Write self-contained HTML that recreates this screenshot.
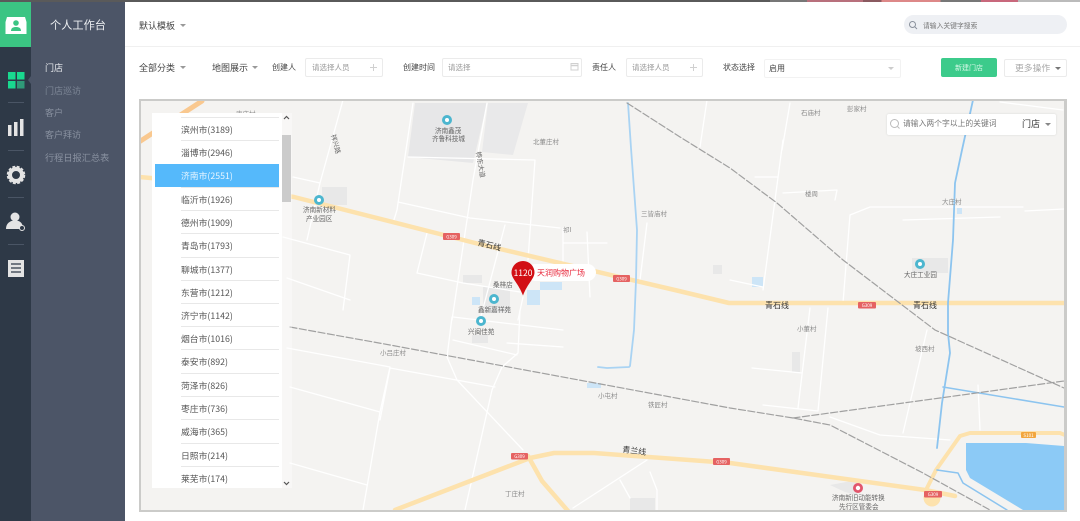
<!DOCTYPE html>
<html lang="zh"><head><meta charset="utf-8"><style>
html,body{margin:0;padding:0;width:1080px;height:521px;overflow:hidden;background:#fff}
body{position:relative;font-family:"Noto Sans CJK SC","Liberation Sans",sans-serif;color:#444}
.a{position:absolute;white-space:nowrap}
.t{position:absolute;white-space:nowrap;line-height:14px;height:14px}
.box{position:absolute;background:#fff;border:1px solid #ebebeb;border-radius:2px;box-sizing:border-box}
.tri{position:absolute;width:0;height:0;border-left:3.5px solid transparent;border-right:3.5px solid transparent;border-top:3.5px solid #aaa}
.row{position:absolute;left:181px;width:98px;height:23px;font-size:8.8px;line-height:23px;color:#555;border-top:1px solid #e8e8e8;box-sizing:border-box}
svg text{font-family:"Noto Sans CJK SC","Liberation Sans",sans-serif}
</style></head><body>
<div class="a" style="left:0;top:0;width:1080px;height:2px;background:#5a5a5a"></div>
<div class="a" style="left:770px;top:0;width:310px;height:2px;background:linear-gradient(90deg,#777 0 12%,#b8707c 12% 30%,#8a5a60 30% 36%,#d88 36% 55%,#777 55% 68%,#c8687c 68% 80%,#bbb 80% 100%)"></div>

<div class="a" style="left:0;top:2px;width:31px;height:519px;background:#2e3947"></div>
<div class="a" style="left:31px;top:2px;width:94px;height:519px;background:#4c5567"></div>
<div class="a" style="left:0;top:2px;width:31px;height:45px;background:#3bc583"></div>
<svg class="a" style="left:0;top:0" width="125" height="300" viewBox="0 0 125 300">
<path d="M7 17h18l1.500 5v12h-21v-12z" fill="#fff"/><circle cx="16" cy="23" r="2.800" fill="#3bc583"/><path d="M11 31c0-3 2-4 5-4s5 1 5 4z" fill="#3bc583"/>
<rect x="8" y="72" width="7.500" height="7.500" fill="#19d98f"/><rect x="17" y="72" width="7.500" height="7.500" fill="#19d98f"/><rect x="8" y="81" width="7.500" height="7.500" fill="#19d98f"/><rect x="17" y="81" width="7.500" height="7.500" fill="#2f9a78"/>
<path d="M31 76l-3 4 3 4z" fill="#4c5567"/>
<rect x="8" y="102" width="16" height="1" fill="#4a5565"/><rect x="8" y="150" width="16" height="1" fill="#4a5565"/><rect x="8" y="197" width="16" height="1" fill="#4a5565"/><rect x="8" y="244" width="16" height="1" fill="#4a5565"/>
<rect x="8" y="125" width="3.500" height="11" fill="#e4e4e4"/><rect x="14" y="122" width="3.500" height="14" fill="#e4e4e4"/><rect x="20" y="119" width="3.500" height="17" fill="#e4e4e4"/>
<circle cx="16" cy="175" r="6" fill="none" stroke="#e4e4e4" stroke-width="4"/><circle cx="16" cy="175" r="8.500" fill="none" stroke="#e4e4e4" stroke-width="1.500" stroke-dasharray="3 1.500"/>
<circle cx="15" cy="217" r="4.500" fill="#e4e4e4"/><path d="M6 229c0-5 3-7 5.500-8h7c2.500 1 4.500 3 4.500 8z" fill="#e4e4e4"/><circle cx="22" cy="228" r="2.500" fill="#2e3947" stroke="#e4e4e4" stroke-width="1"/>
<rect x="8" y="260" width="16" height="17" fill="#e4e4e4"/><path d="M11 264h10M11 268h10M11 272h10" stroke="#2e3947" stroke-width="1.200"/>
</svg>
<div class="t" style="left:50px;top:18px;font-size:11.200px;color:#eef0f2">个人工作台</div>
<div class="t" style="left:45px;top:61px;font-size:9px;color:#e8eaee">门店</div>
<div class="t" style="left:45px;top:84px;font-size:9px;color:#7d8696">门店巡访</div>
<div class="t" style="left:45px;top:106px;font-size:9px;color:#8a92a1">客户</div>
<div class="t" style="left:45px;top:128px;font-size:9px;color:#8a92a1">客户拜访</div>
<div class="t" style="left:45px;top:150px;font-size:9.200px;color:#8a92a1">行程日报汇总表</div>

<div class="t" style="left:139px;top:19px;font-size:9px;color:#444">默认模板</div><div class="tri" style="left:180px;top:24px;border-top-color:#999"></div>
<div class="a" style="left:125px;top:46px;width:955px;height:1px;background:#f0f0f0"></div>
<div class="a" style="left:904px;top:15px;width:163px;height:19px;border-radius:10px;background:#eef0f4"></div>
<svg class="a" style="left:908px;top:20px" width="10" height="10"><circle cx="4.500" cy="4.500" r="3" fill="none" stroke="#8a919c"/><path d="M7 7l2 2" stroke="#8a919c"/></svg>
<div class="t" style="left:923px;top:18px;font-size:6.800px;color:#777">请输入关键字搜索</div>

<div class="t" style="left:139px;top:61px;font-size:9px;color:#444">全部分类</div><div class="tri" style="left:180px;top:66px;border-top-color:#999"></div>
<div class="t" style="left:212px;top:61px;font-size:9px;color:#444">地图展示</div><div class="tri" style="left:252px;top:66px;border-top-color:#999"></div>
<div class="t" style="left:272px;top:61px;font-size:8px;color:#444">创建人</div>
<div class="box" style="left:305px;top:58px;width:78px;height:19px"></div><div class="t" style="left:312px;top:61px;font-size:7.500px;color:#999">请选择人员</div>
<svg class="a" style="left:369px;top:63px" width="9" height="9"><path d="M4.500 1v7M1 4.500h7" stroke="#d0d0d0"/></svg>
<div class="t" style="left:403px;top:61px;font-size:8px;color:#444">创建时间</div>
<div class="box" style="left:442px;top:58px;width:140px;height:19px"></div><div class="t" style="left:448px;top:61px;font-size:7.500px;color:#999">请选择</div>
<svg class="a" style="left:570px;top:62px" width="9" height="9"><rect x="1" y="1.500" width="7" height="6.500" fill="none" stroke="#d0d0d0"/><path d="M1 3.500h7" stroke="#d0d0d0" stroke-width="1.500"/></svg>
<div class="t" style="left:592px;top:61px;font-size:8px;color:#444">责任人</div>
<div class="box" style="left:626px;top:58px;width:77px;height:19px"></div><div class="t" style="left:632px;top:61px;font-size:7.500px;color:#999">请选择人员</div>
<svg class="a" style="left:689px;top:63px" width="9" height="9"><path d="M4.500 1v7M1 4.500h7" stroke="#d0d0d0"/></svg>
<div class="t" style="left:723px;top:61px;font-size:8px;color:#444">状态选择</div>
<div class="box" style="left:764px;top:59px;width:137px;height:19px;border-color:#f2f2f2"></div><div class="t" style="left:769px;top:62px;font-size:8px;color:#444">启用</div><div class="tri" style="left:888px;top:67px;border-top-color:#ccc"></div>
<div class="a" style="left:941px;top:58px;width:56px;height:19px;background:#3ccb8b;border-radius:2px;color:#d8f8e8;font-size:7px;line-height:20px;text-align:center">新建门店</div>
<div class="box" style="left:1004px;top:59px;width:63px;height:18px;border-color:#ebebeb"></div><div class="t" style="left:1015px;top:61px;font-size:8.800px;color:#a8a8a8">更多操作</div><div class="tri" style="left:1055px;top:67px;border-top-color:#777"></div>

<svg class="a" style="left:0;top:0" width="1080" height="521" viewBox="0 0 1080 521">
<defs><clipPath id="m"><rect x="141" y="101" width="923" height="409"/></clipPath></defs>
<rect x="139" y="99" width="928" height="413" fill="#cbcbc9"/>
<rect x="141" y="101" width="923" height="409" fill="#f4f3f1"/>
<g clip-path="url(#m)" fill="none" stroke-linecap="round" stroke-linejoin="round">
<path d="M415 103h72l-14 60-65-6z" fill="#e7e7e8"/>
<path d="M488 103h40l-15 52-31-3z" fill="#e9e9ea"/>
<path d="M322 187h25v18h-25zM912 258h36v15h-36zM463 275h19v8h-19zM483 287h27v26h-27zM472 335h16v8h-16zM792 352h8v20h-8zM713 265h9v9h-9zM830 485l27-5v15l-12-3zM630 498h25v12h-25z" fill="#e8e8e8"/>
<path d="M472 297h8v8h-8zM527 290h13v15h-13zM540 282h22v8h-22zM752 277h11v10h-11zM957 208h5v6h-5zM587 383h14v5h-14z" fill="#cde5f7"/>
<path d="M966 443l60 0 38 3v64h-41l-53-32-4-8z" fill="#8ccaf6"/>

<g stroke="#fff" stroke-width="1.300">
<path d="M343 100l-23 83-13 57M293 177l27 6M287 278l63 22M283 237l67 18-7 55M287 348l103 19M290 387l90 25M390 367l-10 45-17 98M290 463l77 22"/>
<path d="M413 103l-16 107-4 13M487 103l-14 77-21 140M408 157l127 3-7 100M398 202l72 16 90 10M505 225l-25 95M427 233l-10 40 46 10 57 9M587 232l3 65M563 243h44M563 228v35M523 297l-5 23M647 223l-7 57"/>
<path d="M452 317l-5 40 10 23 66 70M520 310l-2 43-16 14-10 23-27 120M453 317l110 13M453 340l64 15M507 343l56 4M390 368l105 19M390 368l-10 52"/>
<path d="M573 508l74-48M650 472l7 18v20M620 480l10 18"/>
<path d="M790 103l-8 47M783 140l-20 150M755 177h23M783 193l54-3-2 10M850 215l-7 88M850 215l20-8h153M1025 211l39-2M903 220l97-3M730 280l33 7M810 308l-12 100M828 308l-10 103M752 368l50 5M763 405l55 6M927 330l-24 103M830 417l50 18 70 5M978 385l2 45M1000 102l63 8M707 100l-7 47"/>
</g>

<g stroke="#fde2ad" stroke-width="4.500">
<path d="M139 177l45 4 110 16 185 47 200 47 50 12h340"/>
<path d="M395 510l135-52 24-5h40l136 10 195 27 30 6"/>
<path d="M528 456l14 25 26 30"/>
<path d="M926 490l10-20 24-34 10-3h90l10 4" stroke-width="4"/>
</g>
<path d="M139 142l63-41" stroke="#f9c88f" stroke-width="5"/>
<circle cx="932" cy="498" r="8.500" fill="#fde2ad"/>

<g stroke="#8cc4ef" stroke-width="1.500">
<path d="M628 103l3 45 6 82-1 50-2 50-4 36-1 1-22 1-9-1" stroke="#a9d3f3" stroke-width="1.800"/>
<path d="M973 100l-11 50-7 33-2 57-5 63 0 30 2 20-8 50-5 45" stroke-width="1.800"/>
<path d="M943 387l121 20M937 470l21 3 5 10 44 27"/>
</g>

<g stroke="#a0a0a0" stroke-width="1.200" stroke-dasharray="7 2.500">
<path d="M627 103l53 34 50 31 47 35 66 57 92 70 129 58"/>
<path d="M290 327l100 18 340 63 63 10 37 7 93 48 67 37"/>
<path d="M793 418l147-20 124-17"/>
</g>
</g>

<g font-size="6.500px" fill="#8b8b8b">
<text x="533" y="144">北董庄村</text><text x="641" y="216">三皆庙村</text><text x="801" y="115">石庙村</text><text x="847" y="111">彭家村</text><text x="805" y="196">楼周</text><text x="942" y="204">大庄村</text><text x="797" y="331">小董村</text><text x="915" y="351">坡西村</text><text x="598" y="398">小屯村</text><text x="648" y="407">铁匠村</text><text x="505" y="496">丁庄村</text><text x="380" y="355">小吕庄村</text><text x="563" y="232">祁I</text><text x="236" y="116">唐庄村</text>
</g>
<g font-size="6.600px" fill="#666">
<text x="435" y="133">济南鑫茂</text><text x="432" y="141">齐鲁科技城</text><text x="303" y="212">济南新材料</text><text x="306" y="221">产业园区</text><text x="493" y="287">桑梓店</text><text x="478" y="312">鑫新嘉祥苑</text><text x="468" y="334">兴闽佳苑</text><text x="904" y="277">大庄工业园</text><text x="832" y="500">济南新旧动能转换</text><text x="839" y="509">先行区管委会</text>
<text transform="translate(331 135) rotate(75)">祥兴路</text>
<text transform="translate(476 152) rotate(80)">桦东大道</text>
</g>
<g font-size="8px" fill="#333">
<text transform="translate(477 245) rotate(14)">青石线</text><text x="765" y="308">青石线</text><text x="913" y="308">青石线</text><text transform="translate(622 452) rotate(7)">青兰线</text>
</g>
<g>
<rect x="443" y="233" width="17" height="7" rx="1" fill="#e56262"/><rect x="613" y="275" width="17" height="7" rx="1" fill="#e56262"/><rect x="858" y="302" width="18" height="6.500" rx="1" fill="#e56262"/><rect x="511" y="453" width="17" height="6.500" rx="1" fill="#e56262"/><rect x="713" y="458" width="17" height="7" rx="1" fill="#e56262"/><rect x="924" y="491" width="18" height="6.500" rx="1" fill="#e56262"/><rect x="1021" y="432" width="15" height="6" rx="1" fill="#f2a63e"/>
</g>
<g font-size="4.500px" fill="#fff" text-anchor="middle">
<text x="451.500" y="238.500">G309</text><text x="621.500" y="280.500">G309</text><text x="867" y="307">G309</text><text x="519.500" y="458">G309</text><text x="721.500" y="463.500">G309</text><text x="933" y="496">G309</text><text x="1028.500" y="437">S101</text>
</g>
<g fill="#4cb6cf">
<circle cx="447" cy="120" r="5"/><circle cx="319" cy="200" r="5"/><circle cx="494" cy="299" r="5"/><circle cx="481" cy="321" r="5"/><circle cx="920" cy="264" r="5"/>
</g>
<g fill="#fff"><circle cx="447" cy="120" r="2"/><circle cx="319" cy="200" r="2"/><circle cx="494" cy="299" r="2"/><circle cx="481" cy="321" r="2"/><circle cx="920" cy="264" r="2"/></g>
<circle cx="858" cy="488" r="5" fill="#e2566c"/><circle cx="858" cy="488" r="2.200" fill="#fff"/>

<rect x="282" y="113" width="10" height="375" fill="#fff" fill-opacity=".35"/>
<rect x="152" y="113" width="130" height="375" fill="#fff"/>
<rect x="282" y="135" width="9" height="67" fill="#cbcbcb"/>
<path d="M284 119l2.500-2.500 2.500 2.500M284 482l2.500 2.500 2.500-2.500" fill="none" stroke="#555" stroke-width="1.200"/>

<rect x="527" y="264" width="69" height="17" rx="8.500" fill="#fff"/>
<path d="M523 261a11.500 11.500 0 0 1 11.500 11.500c0 6-7 11-11.500 23c-4.500-12-11.500-17-11.500-23a11.500 11.500 0 0 1 11.500-11.500z" fill="#d20f14"/>
<text x="523" y="276" font-size="8.500px" fill="#fff" text-anchor="middle">1120</text>
<text x="537" y="275.500" font-size="8px" fill="#e8263a">天润购物广场</text>
</svg>

<div class="row" style="top:117px;">滨州市(3189)</div>
<div class="row" style="top:140px;">淄博市(2946)</div>
<div class="a" style="left:155px;top:164px;width:124px;height:23px;background:#55b9fb"></div>
<div class="row" style="top:164px;color:#e9f6ff;border-top:0;">济南市(2551)</div>
<div class="row" style="top:187px;">临沂市(1926)</div>
<div class="row" style="top:210px;">德州市(1909)</div>
<div class="row" style="top:233px;">青岛市(1793)</div>
<div class="row" style="top:257px;">聊城市(1377)</div>
<div class="row" style="top:280px;">东营市(1212)</div>
<div class="row" style="top:303px;">济宁市(1142)</div>
<div class="row" style="top:326px;">烟台市(1016)</div>
<div class="row" style="top:349px;">泰安市(892)</div>
<div class="row" style="top:373px;">菏泽市(826)</div>
<div class="row" style="top:396px;">枣庄市(736)</div>
<div class="row" style="top:419px;">威海市(365)</div>
<div class="row" style="top:443px;">日照市(214)</div>
<div class="row" style="top:466px;">莱芜市(174)</div>

<div class="a" style="left:887px;top:114px;width:169px;height:21px;background:#fff;border-radius:2px;box-shadow:0 0 2px rgba(0,0,0,.12)"></div>
<svg class="a" style="left:889px;top:118px" width="12" height="12"><circle cx="5.500" cy="5.500" r="4" fill="none" stroke="#bbb"/><path d="M8.500 8.500l2 2" stroke="#bbb"/></svg>
<div class="t" style="left:903px;top:117px;font-size:7.800px;color:#777">请输入两个字以上的关键词</div>
<div class="t" style="left:1022px;top:117px;font-size:9px;color:#333">门店</div><div class="tri" style="left:1045px;top:123px;border-top-color:#888"></div>
</body></html>
